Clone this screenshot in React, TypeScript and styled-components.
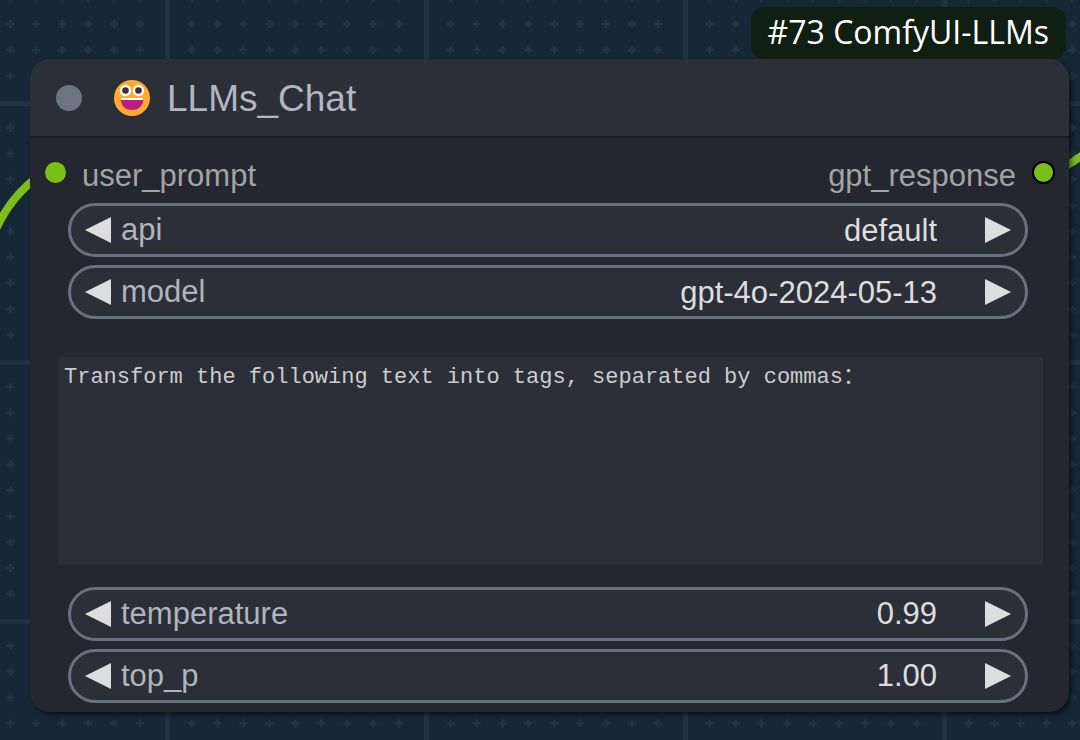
import React, { useState } from "react";
import styled, { createGlobalStyle } from "styled-components";

const GlobalStyle = createGlobalStyle`
  *, *::before, *::after { box-sizing: border-box; }
  body {
    margin: 0;
    background: #162735;
    font-family: "Liberation Sans", Arial, sans-serif;
  }
  button, input, select, textarea { font: inherit; }
`;

const Page = styled.main`
  position: relative;
  min-height: 100vh;
  padding: 7px 11px 28px 30px;
  display: flex;
  flex-direction: column;
  overflow: hidden;
`;

const Backdrop = styled.svg`
  position: absolute;
  inset: 0;
  width: 100%;
  height: 100%;
`;

const Badge = styled.div`
  position: relative;
  align-self: flex-end;
  margin-right: 3px;
  height: 52px;
  padding: 0 17px;
  border-radius: 13px;
  background: #0f1f12;
  color: #fff;
  font-family: "Open Sans", "Noto Sans", sans-serif;
  font-size: 32px;
  line-height: 50px;
  white-space: nowrap;
`;

const Node = styled.article`
  position: relative;
  flex: 1;
  display: flex;
  flex-direction: column;
  border-radius: 20px;
  background: #24272f;
  box-shadow: 3px 3px 4px rgba(0, 0, 0, 0.5);
`;

const Header = styled.header`
  display: flex;
  align-items: center;
  height: 79px;
  padding-left: 26px;
  border-bottom: 2px solid #1c1f26;
  border-radius: 20px 20px 0 0;
  background: #2c2f37;
`;

const CollapseButton = styled.button`
  width: 26px;
  height: 26px;
  padding: 0;
  border: 0;
  border-radius: 50%;
  background: #6f7482;
`;

const Face = styled.svg`
  width: 38px;
  height: 38px;
  margin: 0 16px 0 31px;
`;

const Title = styled.h1`
  margin: 0;
  padding-top: 2px;
  color: #b2b6c0;
  font-size: 37px;
  font-weight: 400;
  line-height: 42px;
`;

const Slots = styled.div`
  display: flex;
  justify-content: space-between;
  height: 65px;
  padding: 20px 14px 0 15px;
`;

const Slot = styled.div`
  display: flex;
  gap: 16px;
  height: 36px;
  color: #a3a3a3;
  font-size: 31px;
  line-height: 36px;
`;

const Port = styled.span<{ $linked?: boolean }>`
  width: ${(p) => (p.$linked ? 23 : 21)}px;
  height: ${(p) => (p.$linked ? 23 : 21)}px;
  margin-top: ${(p) => (p.$linked ? 3 : 4)}px;
  border: ${(p) => (p.$linked ? "2px solid #000" : "0")};
  border-radius: 50%;
  background: #7dbd1a;
`;

const Widgets = styled.div`
  display: flex;
  flex-direction: column;
  gap: 8px;
  padding: 0 41px 0 38px;
`;

const Pill = styled.div`
  display: flex;
  align-items: center;
  height: 54px;
  padding: 0 14px;
  border: 3px solid #6b7080;
  border-radius: 27px;
  background: #2c2f37;
  font-size: 31px;
`;

const Arrow = styled.button`
  display: flex;
  flex: none;
  padding: 0;
  border: 0;
  background: none;
  color: #ddd;
`;

const Name = styled.label`
  margin-left: 10px;
  color: #b0b4be;
  line-height: 36px;
`;

const Choice = styled.select`
  flex: 1;
  min-width: 0;
  height: 36px;
  margin: 0 48px 0 16px;
  padding: 0;
  border: 0;
  outline: 0;
  appearance: none;
  background: none;
  color: #ddd;
  text-align-last: right;
`;

const Amount = styled.input`
  flex: 1;
  min-width: 0;
  height: 36px;
  margin: 0 48px 0 16px;
  padding: 0;
  border: 0;
  outline: 0;
  appearance: textfield;
  background: none;
  color: #ddd;
  text-align: right;

  &::-webkit-inner-spin-button { appearance: none; margin: 0; }
`;

const Prompt = styled.textarea`
  flex: 1;
  min-height: 120px;
  margin: 38px 26px 22px 28px;
  padding: 7px 6px;
  border: 0;
  outline: 0;
  resize: none;
  background: #2c2f37;
  color: #ccc;
  font-family: "Liberation Mono", "Noto Sans CJK SC", monospace;
  font-size: 22px;
  line-height: 28px;
`;

const Footer = styled(Widgets)`
  padding-bottom: 9px;
`;

const ticks = [1, 2, 3, 4, 5, 6, 7, 8, 9].map((n) => n * 25.9 - 1.7);

function Grid() {
  return (
    <Backdrop aria-hidden="true">
      <defs>
        <pattern id="grid" x="165" y="101" width="259" height="259" patternUnits="userSpaceOnUse">
          <path d="M0 2.500H259M2.500 0V259" stroke="#213341" strokeWidth="5" />
          {ticks.map((y) =>
            ticks.map((x) => (
              <path
                key={`${x}-${y}`}
                transform="translate(2.5 2.5)"
                d={`M${x - 4} ${y}h8M${x} ${y - 4}v8M${x - 2} ${y}h4`}
                stroke="#223442"
                strokeWidth="2.5"
              />
            )),
          )}
        </pattern>
      </defs>
      <rect width="100%" height="100%" fill="url(#grid)" />
      <g fill="none" stroke="#7dbd1a" strokeWidth="8">
        <path d="M-6 234C4 209 18 191 40 175" />
        <svg x="100%" overflow="visible">
          <path d="M-20 170Q-6 161 6 153" />
        </svg>
      </g>
    </Backdrop>
  );
}

function Triangle({ right }: { right?: boolean }) {
  return (
    <svg width="26" height="26" viewBox="0 0 26 26" fill="currentColor">
      <path d={right ? "M0 0L26 13L0 26Z" : "M26 0L0 13L26 26Z"} />
    </svg>
  );
}

function Stepper(props: {
  id: string;
  onPrev?: () => void;
  onNext?: () => void;
  children: React.ReactNode;
}) {
  return (
    <Pill>
      <Arrow type="button" aria-label={`Previous ${props.id}`} onClick={props.onPrev}>
        <Triangle />
      </Arrow>
      <Name htmlFor={props.id}>{props.id}</Name>
      {props.children}
      <Arrow type="button" aria-label={`Next ${props.id}`} onClick={props.onNext}>
        <Triangle right />
      </Arrow>
    </Pill>
  );
}

function ChoiceWidget({ id, value }: { id: string; value: string }) {
  return (
    <Stepper id={id}>
      <Choice id={id} defaultValue={value}>
        <option>{value}</option>
      </Choice>
    </Stepper>
  );
}

function NumberWidget({ id, initial }: { id: string; initial: string }) {
  const [value, setValue] = useState(initial);
  const step = (by: number) => setValue((Number(value) + by).toFixed(2));
  return (
    <Stepper id={id} onPrev={() => step(-0.01)} onNext={() => step(0.01)}>
      <Amount
        id={id}
        type="number"
        step="0.01"
        value={value}
        onChange={(e) => setValue(e.target.value)}
      />
    </Stepper>
  );
}

export default function App() {
  return (
    <>
      <GlobalStyle />
      <Page>
        <Grid />
        <Badge>#73 ComfyUI-LLMs</Badge>
        <Node>
          <Header>
            <CollapseButton type="button" aria-label="Collapse node" />
            <Face viewBox="0 0 38 38" aria-hidden="true">
              <circle cx="19" cy="19" r="18" fill="#ffab2d" />
              <circle cx="12.5" cy="11.5" r="5.7" fill="#fff" />
              <circle cx="25.5" cy="11.5" r="5.7" fill="#fff" />
              <circle cx="12.5" cy="11.5" r="3.3" fill="#4a2a33" />
              <circle cx="25.5" cy="11.5" r="3.3" fill="#4a2a33" />
              <path d="M7.5 19H30.5C30.5 26.5 26 31 19 31S7.5 26.5 7.5 19Z" fill="#bb1d80" />
              <path d="M7.5 19H30.5L30 21H8Z" fill="#fff" />
            </Face>
            <Title>LLMs_Chat</Title>
          </Header>
          <Slots>
            <Slot>
              <Port />
              user_prompt
            </Slot>
            <Slot>
              gpt_response
              <Port $linked />
            </Slot>
          </Slots>
          <Widgets>
            <ChoiceWidget id="api" value="default" />
            <ChoiceWidget id="model" value="gpt-4o-2024-05-13" />
          </Widgets>
          <Prompt
            aria-label="Prompt"
            spellCheck={false}
            defaultValue="Transform the following text into tags, separated by commas："
          />
          <Footer>
            <NumberWidget id="temperature" initial="0.99" />
            <NumberWidget id="top_p" initial="1.00" />
          </Footer>
        </Node>
      </Page>
    </>
  );
}
